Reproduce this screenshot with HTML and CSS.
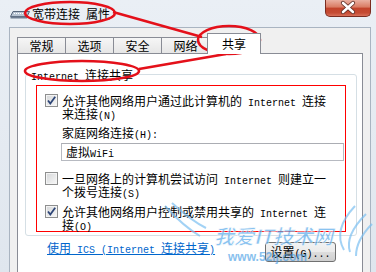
FILE: index.html
```html
<!DOCTYPE html>
<html lang="zh-CN">
<head>
    <meta charset="UTF-8">
    <title>宽带连接 属性</title>
    <link rel="stylesheet" href="styles.css">
</head>
<body>
    <div class="titlebar">
        <svg class="app-icon" width="20" height="8" viewBox="0 0 20 8">
            <path d="M3 0.5 H19.5 L17 5.5 H0.5 Z" fill="#b8c4d2" stroke="#56657a"/>
            <path d="M0.5 5.5 H17 V7.5 H0.5 Z" fill="#6d7c91"/>
            <path d="M4 2.5 H16" stroke="#ffffff" stroke-dasharray="1 1"/>
        </svg>
        <span class="title">宽带连接<span class="lat"> </span>属性</span>
        <div class="close">
            <svg width="44" height="16" viewBox="0 0 44 16">
                <path d="M17 3 L27 12 M27 3 L17 12" stroke="#5a2a22" stroke-width="4.2" stroke-linecap="round"/>
                <path d="M17 3 L27 12 M27 3 L17 12" stroke="#ffffff" stroke-width="2.6" stroke-linecap="round"/>
            </svg>
        </div>
    </div>

    <div class="client">
        <div class="tabs">
            <div class="tab">常规</div>
            <div class="tab">选项</div>
            <div class="tab">安全</div>
            <div class="tab">网络</div>
            <div class="tab active">共享</div>
        </div>
        <div class="pane">
            <fieldset class="group">
                <legend><span class="lat">Internet </span>连接共享</legend>
                <div class="marked">
                    <div class="option">
                        <span class="check on"><svg width="11" height="11" viewBox="0 0 11 11"><path d="M2 5.5 L4.3 8.5 L9.2 1.8" fill="none" stroke="#2d4577" stroke-width="1.8"/></svg></span>
                        <div class="option-text">允许其他网络用户通过此计算机的<span class="lat"> Internet </span>连接<br>来连接<span class="lat">(N)</span></div>
                    </div>
                    <div class="field-label">家庭网络连接<span class="lat">(H):</span></div>
                    <div class="field">虚拟<span class="lat">WiFi</span></div>
                    <div class="option second">
                        <span class="check"></span>
                        <div class="option-text">一旦网络上的计算机尝试访问<span class="lat"> Internet </span>则建立一<br>个拨号连接<span class="lat">(S)</span></div>
                    </div>
                    <div class="option third">
                        <span class="check on"><svg width="11" height="11" viewBox="0 0 11 11"><path d="M2 5.5 L4.3 8.5 L9.2 1.8" fill="none" stroke="#2d4577" stroke-width="1.8"/></svg></span>
                        <div class="option-text">允许其他网络用户控制或禁用共享的<span class="lat"> Internet </span>连<br>接<span class="lat">(O)</span></div>
                    </div>
                </div>
            </fieldset>
            <div class="footer">
                <a href="#" class="help">使用<span class="lat"> ICS (Internet </span>连接共享<span class="lat">)</span></a>
                <button class="btn">设置<span class="lat">(G)...</span></button>
            </div>
        </div>
    </div>

    <svg class="marks" width="376" height="272" viewBox="0 0 376 272">
        <g fill="none" stroke="#e4101a" stroke-width="2.6">
            <ellipse cx="70" cy="13" rx="45" ry="11"/>
            <ellipse cx="229" cy="40" rx="31" ry="14"/>
            <ellipse cx="82" cy="71" rx="57" ry="10"/>
            <path d="M113 12 L202 37"/>
            <path d="M139 69 L226 54"/>
        </g>
        <g fill="none" stroke="#7cc0f2" stroke-width="2" opacity="0.7">
            <path d="M355 206 C340 222 336 236 344 250"/>
            <path d="M366 214 C352 228 346 240 350 252"/>
            <path d="M372 224 C360 236 356 246 356 256"/>
            <path d="M165 206 C176 218 186 228 200 236"/>
            <path d="M172 203 C184 214 194 222 206 228"/>
        </g>
        <text class="wm-title" x="214" y="244">我爱IT技术网</text>
        <text class="wm-url" x="228" y="261">www.52ij.com</text>
    </svg>
</body>
</html>
```

FILE: styles.css
```css
* {
    box-sizing: border-box;
}
body {
    margin: 0;
    width: 376px;
    height: 272px;
    overflow: hidden;
    position: relative;
    font-family: "Noto Sans CJK SC", sans-serif;
    font-size: 12px;
    line-height: 13px;
    color: #000;
    background: linear-gradient(#eaeff5, #dfe6ee);
}
.lat {
    font-family: "Liberation Mono", monospace;
    font-size: 10px;
    line-height: 0;
    white-space: pre;
}
.titlebar {
    display: flex;
    align-items: center;
    height: 27px;
    padding-left: 10px;
}
.app-icon {
    flex: none;
    margin-top: 3px;
}
.title {
    margin-left: 2px;
    color: #000;
}
.close {
    align-self: flex-start;
    margin-left: auto;
    margin-right: 5px;
    width: 46px;
    height: 17px;
    border: 1px solid #7a2c20;
    border-top: none;
    border-radius: 0 0 5px 5px;
    background: linear-gradient(#eab0a2, #d97a62 45%, #c2432b 50%, #c54b33 80%, #d8705a);
}
.close svg {
    display: block;
}
.client {
    margin: 0 5px 0 9px;
    height: 245px;
    padding: 5px 7px 0 7px;
    background: #f0f0f0;
    border: 1px solid #a9b4c1;
    border-bottom: none;
}
.tabs {
    display: flex;
    align-items: flex-end;
    height: 20px;
}
.tab {
    width: 49px;
    height: 16px;
    margin-right: -1px;
    border: 1px solid #898c95;
    border-bottom: none;
    background: linear-gradient(#f6f6f6, #e6e6e6);
    text-align: center;
    line-height: 15px;
}
.tab.active {
    width: 54px;
    height: 21px;
    margin: 0 -1px -1px -2px;
    background: #fff;
    line-height: 20px;
    position: relative;
    z-index: 1;
}
.pane {
    height: 220px;
    padding: 0 5px 0 7px;
    background: #fff;
    border: 1px solid #898c95;
}
.group {
    margin: 14px 0 0;
    padding: 4px 10px 3px;
    border: 1px solid #d5dfe5;
    border-radius: 3px;
    min-width: 0;
}
.group legend {
    margin-left: -7px;
    padding: 0 2px;
    line-height: 13px;
}
.marked {
    border: 1px solid #f00;
    padding: 8px 1px 0 8px;
}
.option {
    display: flex;
    gap: 4px;
    white-space: nowrap;
}
.option.second {
    margin-top: 11px;
}
.option.third {
    margin-top: 7px;
}
.check {
    flex: none;
    width: 13px;
    height: 13px;
    border: 1px solid #8e8f8f;
    background: linear-gradient(135deg, #d4d6d8, #f8f8f8);
    box-shadow: inset 0 0 0 1px #f4f4f4;
    display: flex;
    align-items: center;
    justify-content: center;
}
.check svg {
    display: block;
}
.field-label {
    margin: 6px 0 0 17px;
}
.field {
    margin: 4px 0 0 16px;
    height: 18px;
    padding-left: 4px;
    border: 1px solid #b7bac1;
    border-top-color: #abadb3;
    line-height: 16px;
}
.footer {
    display: flex;
    justify-content: space-between;
    align-items: flex-start;
    margin: 5px 21px 0 22px;
}
.help {
    color: #0066cc;
    text-decoration: underline;
}
.btn {
    margin-top: 1px;
    width: 71px;
    height: 20px;
    padding: 0;
    border: 1px solid #707070;
    border-radius: 3px;
    background: linear-gradient(#f2f2f2, #ebebeb 50%, #dddddd 50%, #cfcfcf);
    font: inherit;
    line-height: 18px;
    color: #000;
}
.marks {
    position: absolute;
    left: 0;
    top: 0;
    pointer-events: none;
}
.wm-title {
    font-family: "Noto Sans CJK SC", sans-serif;
    font-size: 20px;
    font-weight: bold;
    font-style: italic;
    fill: #5aaaea;
    opacity: 0.7;
    stroke: #ffffff;
    stroke-width: 0.6;
}
.wm-url {
    font-family: "Liberation Sans", sans-serif;
    font-size: 12px;
    font-weight: bold;
    fill: #4a9fe6;
    opacity: 0.65;
}
```
